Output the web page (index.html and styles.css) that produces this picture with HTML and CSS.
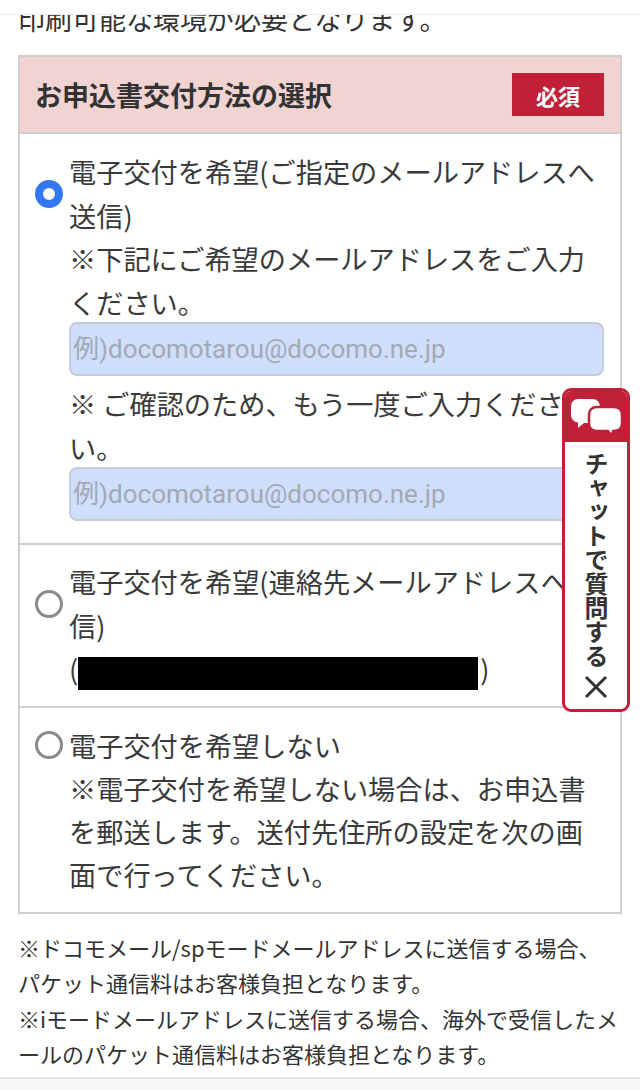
FILE: index.html
```html
<!DOCTYPE html>
<html lang="ja">
<head>
<meta charset="utf-8">
<title>お申込書交付方法の選択</title>
<link rel="stylesheet" href="styles.css">
</head>
<body>
<div class="page">
  <div class="topbar"></div>
  <main class="content">
    <p class="intro">印刷可能な環境が必要となります。</p>
    <section class="box">
      <header class="box-head">
        <h2 class="box-title">お申込書交付方法の選択</h2>
        <span class="badge">必須</span>
      </header>
      <div class="option option-first">
        <div class="radio-col"><span class="radio radio-on"></span></div>
        <div class="option-body">
          <p class="label">電子交付を希望(ご指定のメールアドレスへ送信)</p>
          <p class="label label-hint">※下記にご希望のメールアドレスをご入力ください。</p>
          <div class="field">例)docomotarou@docomo.ne.jp</div>
          <p class="label label-confirm">※ ご確認のため、もう一度ご入力ください。</p>
          <div class="field">例)docomotarou@docomo.ne.jp</div>
        </div>
      </div>
      <div class="option option-second">
        <div class="radio-col"><span class="radio"></span></div>
        <div class="option-body">
          <p class="label">電子交付を希望(連絡先メールアドレスへ送信)</p>
          <p class="label mail-line">(<span class="redact"></span>)</p>
        </div>
      </div>
      <div class="option option-third">
        <div class="radio-col"><span class="radio"></span></div>
        <div class="option-body">
          <p class="label">電子交付を希望しない</p>
          <p class="label">※電子交付を希望しない場合は、お申込書を郵送します。送付先住所の設定を次の画面で行ってください。</p>
        </div>
      </div>
    </section>
    <div class="notes">
      <p>※ドコモメール/spモードメールアドレスに送信する場合、<br>パケット通信料はお客様負担となります。</p>
      <p>※iモードメールアドレスに送信する場合、海外で受信したメールのパケット通信料はお客様負担となります。</p>
    </div>
  </main>
  <div class="bottombar"></div>
  <aside class="chat">
    <div class="chat-head">
      <svg class="chat-icon" viewBox="0 0 50 36" width="50" height="36" aria-hidden="true">
        <path d="M7 0h14c5 0 8 3 8 8v8c0 5-3 8-8 8H13l-6 5 0-5.500C3 23 0 20 0 16V8C0 3 3 0 7 0z" fill="#fff"/>
        <path d="M26 8h17c5 0 8 3 8 8v8c0 5-3 8-8 8h-1l-1 5-4-5H26c-5 0-8-3-8-8v-8c0-5 3-8 8-8z" fill="#fff" stroke="#bf2139" stroke-width="2.500"/>
      </svg>
    </div>
    <div class="chat-body">
      <span class="chat-text">チャットで質問する</span>
      <svg class="chat-close" viewBox="0 0 24 24" width="24" height="24" aria-hidden="true">
        <path d="M2 2l20 20M22 2L2 22" stroke="#333" stroke-width="3" fill="none"/>
      </svg>
    </div>
  </aside>
</div>
</body>
</html>
```

FILE: styles.css
```css
* { box-sizing: border-box; }
html, body { margin: 0; padding: 0; background: #fff; }
body {
  font-family: "Noto Sans CJK JP", "Noto Sans", sans-serif;
  color: #333;
}
p, h2 { margin: 0; }
.page {
  position: relative;
  width: 640px;
  height: 1090px;
  overflow: hidden;
  display: flex;
  flex-direction: column;
}
.topbar {
  height: 15px;
  flex: none;
  background: #fff;
  border-bottom: 1px solid #ececec;
  position: relative;
  z-index: 2;
}
.content {
  flex: 1;
  min-height: 0;
  overflow: hidden;
  padding: 0 18px;
}
.intro {
  font-size: 27px;
  line-height: 30px;
  margin-top: -11px;
  margin-bottom: 21px;
}
.box {
  border: 2px solid #cfcfcf;
  background: #fff;
}
.box-head {
  height: 77px;
  background: #f1d4d2;
  border-bottom: 2px solid #cfcfcf;
  display: flex;
  align-items: center;
  justify-content: space-between;
  padding: 0 16px 0 15px;
}
.box-title {
  font-size: 27px;
  font-weight: 700;
  color: #333;
}
.badge {
  width: 92px;
  height: 43px;
  background: #bf2139;
  color: #fff;
  font-size: 22px;
  font-weight: 700;
  display: flex;
  align-items: center;
  justify-content: center;
}
.option {
  display: flex;
  padding-right: 16px;
  border-bottom: 2px solid #cfcfcf;
}
.option-first { height: 411px; padding-top: 16px; }
.option-second { height: 163px; padding-top: 15px; }
.option-third { height: 204px; padding-top: 16px; border-bottom: 0; }
.radio-col {
  width: 49px;
  flex: none;
  display: flex;
  justify-content: center;
  padding-left: 9px;
}
.radio {
  width: 28px;
  height: 28px;
  margin-top: 30px;
  border-radius: 50%;
  border: 3px solid #8a8a8a;
  background: #fff;
}
.option-third .radio { margin-top: 7px; }
.radio-on { border: 8px solid #3478f0; }
.option-body { flex: 1; min-width: 0; }
.label {
  font-size: 27.200px;
  line-height: 43.500px;
  color: #3a3a3a;
}
.option-third .label { line-height: 43px; }
.label-hint { margin-bottom: -2px; }
.field {
  height: 54px;
  background: #cfdffb;
  border: 2px solid #c4ccd8;
  border-radius: 8px;
  font-family: "Roboto", "Noto Sans CJK JP", sans-serif;
  font-size: 26px;
  line-height: 50px;
  padding-left: 2px;
  color: #a2a9b5;
}
.label-confirm { margin-top: 6px; margin-bottom: -2px; }
.mail-line { display: flex; align-items: center; }
.redact {
  display: inline-block;
  width: 400px;
  height: 33px;
  margin: 10px 2px 0 0;
  background: #000;
}
.notes {
  margin-top: 16px;
  font-size: 22px;
  line-height: 35.400px;
  color: #333;
}
.bottombar {
  height: 13px;
  flex: none;
  background: #f6f6f6;
  border-top: 2px solid #e6e6e6;
}
.chat {
  position: absolute;
  left: 562px;
  top: 388px;
  width: 68px;
  height: 324px;
  border: 3px solid #bf2139;
  border-radius: 9px;
  background: #fff;
  overflow: hidden;
  display: flex;
  flex-direction: column;
  z-index: 3;
}
.chat-head {
  height: 51px;
  flex: none;
  background: #bf2139;
  display: flex;
  align-items: center;
  justify-content: center;
}
.chat-body {
  flex: 1;
  display: flex;
  flex-direction: column;
  align-items: center;
  padding-top: 10px;
}
.chat-text {
  writing-mode: vertical-rl;
  font-size: 24px;
  font-weight: 700;
  line-height: 1;
  color: #333;
}
.chat-close { margin-top: 7px; }
```
